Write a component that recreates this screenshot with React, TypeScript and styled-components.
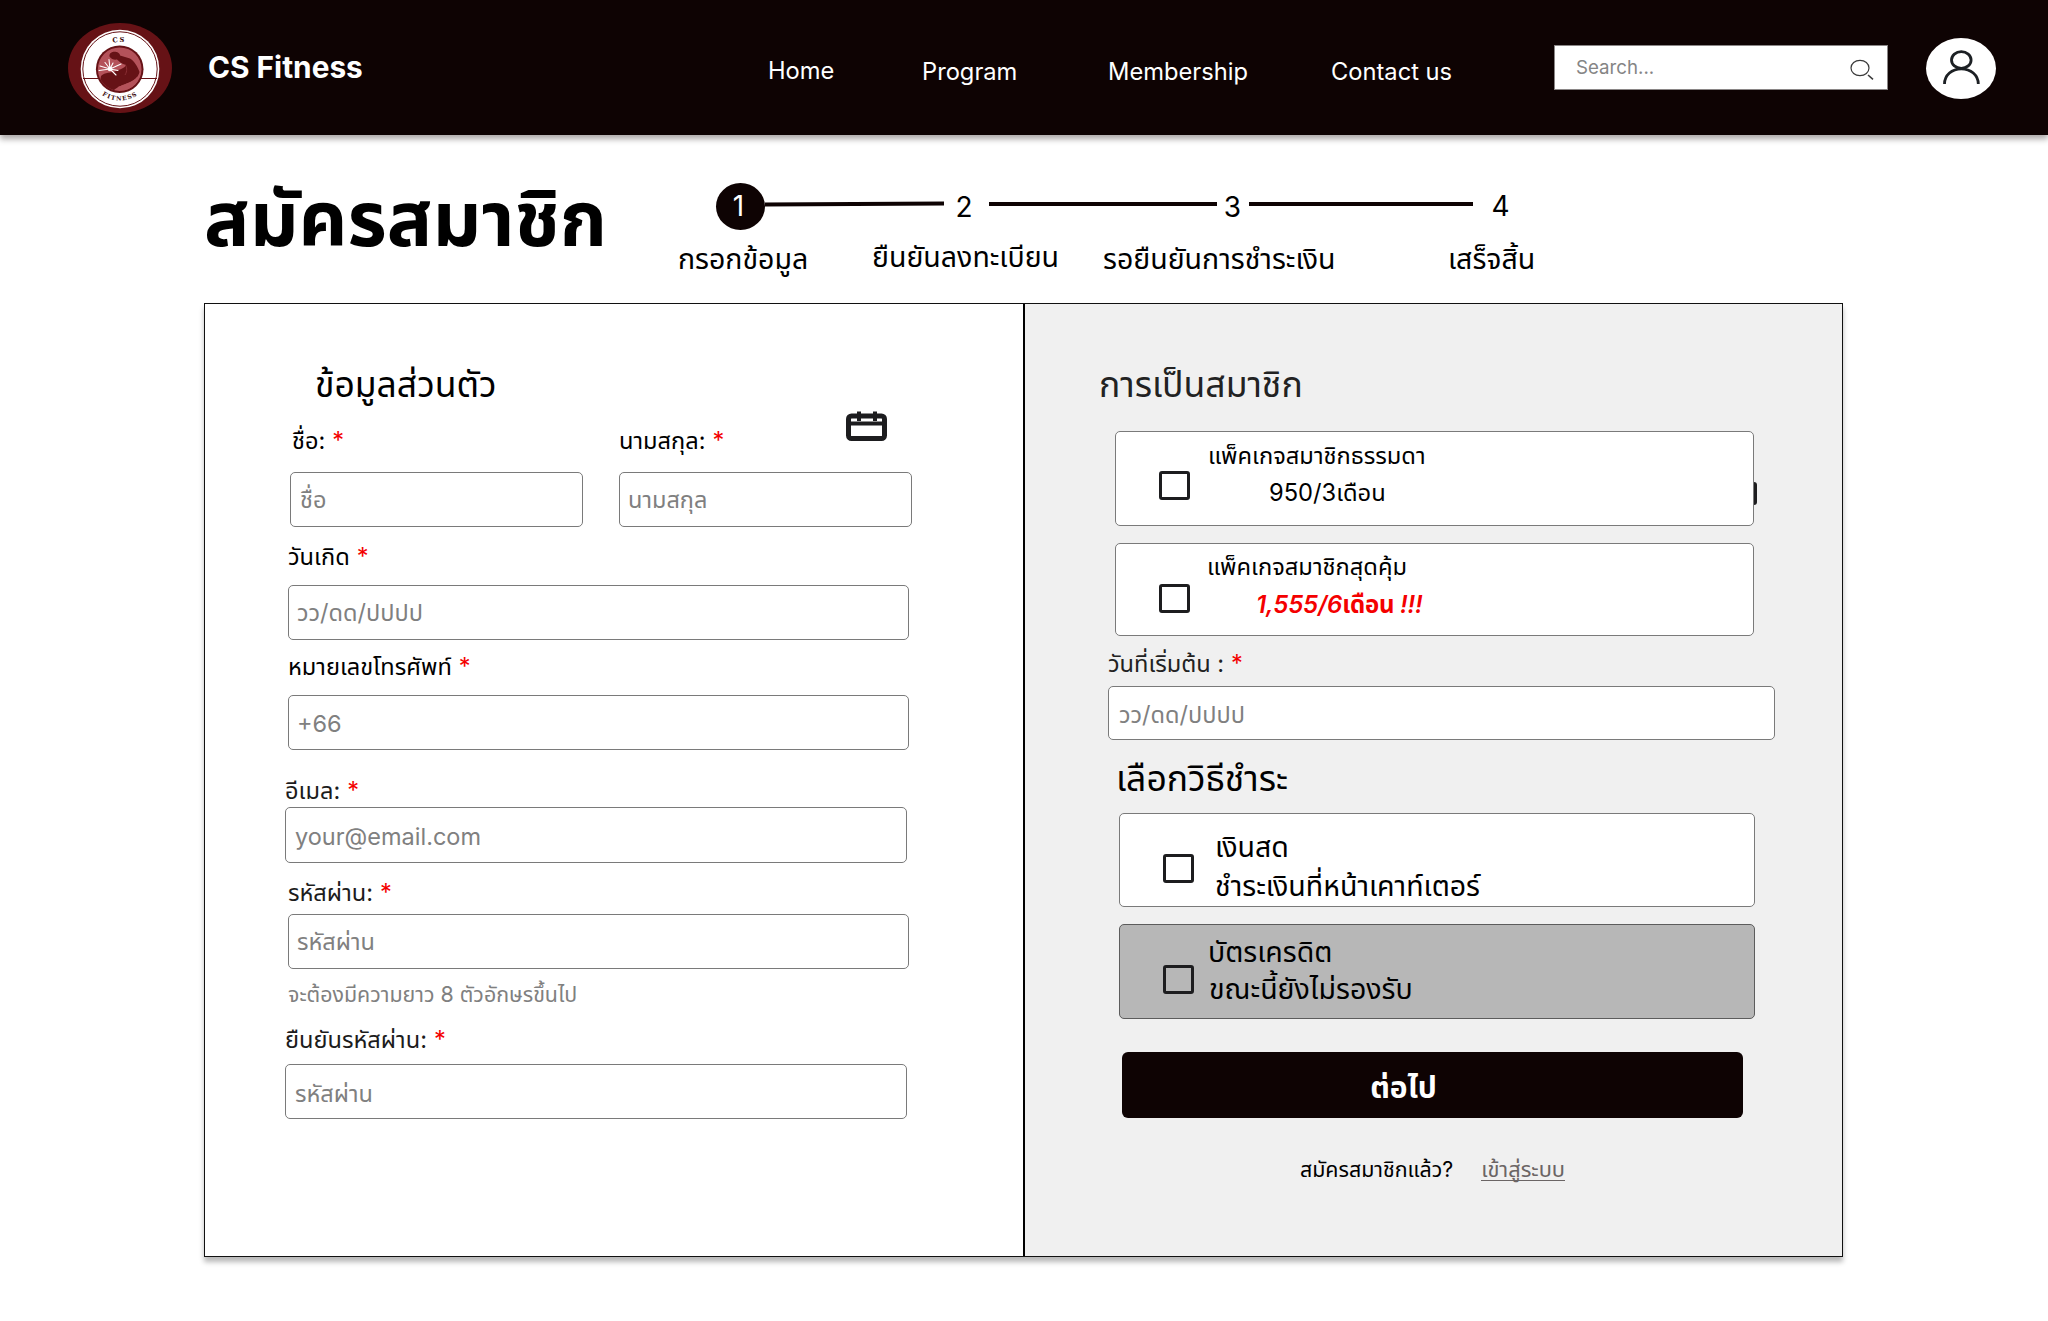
import React from "react";
import styled, { createGlobalStyle } from "styled-components";

const INK = "#0e0303";

const Global = createGlobalStyle`
  *, *::before, *::after { box-sizing: border-box; }
  body {
    margin: 0;
    background: #fff;
    color: #000;
    font-family: Inter, "Noto Sans Thai", "Noto Sans", sans-serif;
  }
`;

const Page = styled.div`
  min-height: 1321px;
  background: #fff;
  overflow: hidden;
`;

/* ---------- header ---------- */

const Header = styled.header`
  height: 135px;
  padding-left: 68px;
  display: grid;
  grid-template-columns: 140px 560px 154px 186px 223px 223px 372px 70px;
  align-items: center;
  background: ${INK};
  color: #fff;
  box-shadow: 0 4px 6px rgba(14, 3, 3, 0.35);
`;

const Logo = styled.svg`
  display: block;
  width: 104px;
  height: 90px;
  margin-top: 1px;
`;

const Brand = styled.div`
  padding-bottom: 2px;
  font-size: 29.8px;
  line-height: 36px;
  font-weight: 700;
  white-space: nowrap;
`;

const NavLink = styled.a<{ $drop: number }>`
  font-size: 23.7px;
  line-height: 30px;
  padding-top: ${(p) => p.$drop}px;
  color: #fff;
  text-decoration: none;
  white-space: nowrap;
`;

const Search = styled.div`
  width: 334px;
  height: 45px;
  padding: 0 12px 0 21px;
  display: flex;
  align-items: center;
  justify-content: space-between;
  background: #fff;
  border: 1px solid #8a8686;
  color: #858585;
  font-size: 18.7px;
  line-height: 24px;
`;

const SearchIcon = styled.svg`
  width: 25px;
  height: 22px;
  margin-top: 4px;
`;

const Avatar = styled.svg`
  display: block;
  width: 70px;
  height: 61px;
  margin-top: 2px;
`;

/* ---------- title and steps ---------- */

const Intro = styled.section`
  height: 168px;
  padding-left: 204px;
  display: flex;
  align-items: flex-start;
`;

const Title = styled.h1`
  width: 474px;
  margin: 39px 0 0;
  font-size: 75.8px;
  line-height: 90px;
  font-weight: 700;
  white-space: nowrap;
`;

const Steps = styled.div`
  padding-top: 47px;
`;

const Track = styled.div`
  height: 47px;
  padding-left: 38px;
  display: flex;
  align-items: center;
`;

const Dot = styled.div`
  width: 49px;
  height: 47px;
  margin-top: 1px;
  border-radius: 50%;
  display: flex;
  align-items: center;
  justify-content: center;
  padding-right: 4px;
  background: ${INK};
  color: #fff;
  font-size: 28px;
`;

const StepNumber = styled.div<{ $w: number; $drop?: number; $pull?: number }>`
  width: ${(p) => p.$w}px;
  padding: ${(p) => p.$drop ?? 0}px ${(p) => p.$pull ?? 0}px 0 0;
  text-align: center;
  font-size: 28px;
  line-height: 34px;
`;

const Rail = styled.div<{ $w: number; $tilt?: number }>`
  width: ${(p) => p.$w}px;
  height: 4px;
  margin-top: -3px;
  background: ${INK};
  transform: rotate(${(p) => p.$tilt ?? 0}deg);
`;

const StepLabels = styled.div`
  margin-top: 10px;
  display: grid;
  grid-template-columns: 194px 231px 345px auto;
`;

const StepLabel = styled.div<{ $lift?: number }>`
  margin-top: ${(p) => -(p.$lift ?? 0)}px;
  font-size: 28.5px;
  line-height: 40px;
  white-space: nowrap;
`;

/* ---------- panels ---------- */

const Panels = styled.main`
  width: 1639px;
  height: 954px;
  margin-left: 204px;
  display: grid;
  grid-template-columns: 818px 1fr;
  border: 1px solid #111;
  box-shadow: 0 5px 5px rgba(0, 0, 0, 0.28);
`;

const Personal = styled.section`
  padding-left: 79px;
  background: #fff;
`;

const Membership = styled.section`
  padding-left: 83px;
  background: #f0f0f0;
  border-left: 2px solid #000;
`;

const Heading = styled.h2<{ $top: number; $left: number; $color?: string }>`
  margin: ${(p) => p.$top}px 0 0 ${(p) => p.$left}px;
  font-size: 35.5px;
  line-height: 44px;
  font-weight: 400;
  color: ${(p) => p.$color ?? "#000"};
  white-space: nowrap;
`;

const Row = styled.div`
  display: flex;
  align-items: flex-start;
`;

const Field = styled.div<{ $top?: number; $left?: number }>`
  margin: ${(p) => p.$top ?? 0}px 0 0 ${(p) => p.$left ?? 0}px;
`;

const LabelRow = styled.div<{ $indent?: number; $color?: string }>`
  height: 30px;
  padding-left: ${(p) => p.$indent ?? 1}px;
  display: flex;
  gap: 7px;
  font-size: 23.6px;
  line-height: 30px;
  color: ${(p) => p.$color ?? "#000"};
  white-space: nowrap;
`;

const Star = styled.span`
  color: #f40000;
`;

const Box = styled.div<{ $w: number; $h?: number; $gap: number; $nudge?: number; $pad?: number }>`
  width: ${(p) => p.$w}px;
  height: ${(p) => p.$h ?? 55}px;
  margin-top: ${(p) => p.$gap}px;
  padding: ${(p) => p.$nudge ?? 0}px 8px 0 ${(p) => p.$pad ?? 8}px;
  display: flex;
  align-items: center;
  background: #fff;
  border: 1px solid #7a7a7a;
  border-radius: 5px;
  color: #808080;
  font-size: 23.5px;
  line-height: 30px;
  white-space: nowrap;
`;

const CalendarIcon = styled.svg`
  width: 41px;
  height: 30px;
  margin: -15px 25px 0 auto;
`;

const Hint = styled.p`
  margin: 10px 0 0 4px;
  font-size: 21.4px;
  line-height: 30px;
  color: #808080;
  white-space: nowrap;
`;

/* ---------- option cards ---------- */

const Card = styled.div<{ $top: number; $left: number; $w: number; $h: number; $muted?: boolean }>`
  position: relative;
  width: ${(p) => p.$w}px;
  height: ${(p) => p.$h}px;
  margin: ${(p) => p.$top}px 0 0 ${(p) => p.$left}px;
  display: flex;
  align-items: flex-start;
  background: ${(p) => (p.$muted ? "#b7b7b7" : "#fff")};
  border: 1px solid ${(p) => (p.$muted ? "#5c5c5c" : "#7a7a7a")};
  border-radius: 5px;
`;

const Check = styled.span<{ $top: number }>`
  flex: none;
  width: 31px;
  height: 29px;
  margin: ${(p) => p.$top}px 0 0 43px;
  border: 3px solid #1d1d1f;
  border-radius: 3px;
`;

const CardText = styled.div<{ $left: number }>`
  margin-left: ${(p) => p.$left}px;
`;

const Line = styled.div<{ $top: number; $size: number; $indent?: number }>`
  margin-top: ${(p) => p.$top}px;
  padding-left: ${(p) => p.$indent ?? 0}px;
  font-size: ${(p) => p.$size}px;
  line-height: 36px;
  white-space: nowrap;
`;

const Deal = styled(Line)`
  color: #f40000;
  font-weight: 700;
  letter-spacing: -0.15px;
`;

const Slanted = styled.span`
  font-style: italic;
  font-weight: 600;
`;

const Tab = styled.span`
  position: absolute;
  top: 50px;
  right: -4px;
  width: 3px;
  height: 23px;
  background: #1d1d1f;
  border-radius: 0 3px 3px 0;
`;

const Submit = styled.button`
  display: block;
  width: 621px;
  height: 66px;
  margin: 33px 0 0 14px;
  padding: 3px 58px 0 0;
  border: 0;
  border-radius: 6px;
  background: ${INK};
  color: #fff;
  font: 700 30px/36px Inter, "Noto Sans Thai", "Noto Sans", sans-serif;
`;

const SignIn = styled.div`
  margin: 36px 0 0 192px;
  display: flex;
  gap: 28px;
  font-size: 21.4px;
  line-height: 30px;
  white-space: nowrap;
`;

const SignInLink = styled.a`
  height: 27px;
  color: #6b6565;
  border-bottom: 1px solid #6b6565;
  font-size: 21.8px;
`;

function ClubLogo() {
  return (
    <Logo viewBox="0 0 104 90">
      <defs>
        <path id="arcTop" d="M25 46 A27 27 0 0 1 79 46" />
        <path id="arcBottom" d="M20.500 46 A31.500 31.500 0 0 0 83.500 46" />
        <clipPath id="disc">
          <circle cx="51.700" cy="46.200" r="21.800" />
        </clipPath>
      </defs>
      <ellipse cx="52" cy="45" rx="52" ry="45" fill="#661216" />
      <circle cx="52" cy="46" r="39.300" fill="#fff" />
      <circle cx="52" cy="46" r="37.200" fill="none" stroke="#661216" strokeWidth="1" />
      <path d="M15 55.500H89" stroke="#661216" strokeWidth="1.200" />
      <circle cx="51.700" cy="46.200" r="23.800" fill="#661216" />
      <circle cx="51.700" cy="46.200" r="21.800" fill="#b4525a" />
      <g clipPath="url(#disc)">
        <path
          d="M41.500 33.500 C41 30 44 28.500 47.500 28.800 C50.500 29.200 52 31 52 32.500 L62 35.500 C66 38 69.500 43 71.500 49 C70.500 54 66 58 60 60 C55 62 50 63 45 68 L30 68 L33 53 C37 49 43 50 48 48 C52 46.500 57 45 58 42 C54 41 51 38.500 49 36.500 C46.500 37 43.500 36.500 41.500 33.500Z"
          fill="#661216"
        />
        <path d="M57 41.500 C59 44 59.500 48 57 52" fill="none" stroke="#8d3238" strokeWidth="0.900" />
        <path d="M50 64 C57 61 65 59 69 54 L70 60 L60 68 L51 67Z" fill="#b4525a" />
      </g>
      <g stroke="#fff" strokeWidth="1.100" strokeLinecap="round">
        <path d="M42 46L32 43M42 46L37 39.500M42 46L41 36.500M42 46L45 40M42 46L53 41M42 46L50 47.500M42 46L31 47.500M42 46L48 52" />
        <circle cx="42" cy="46" r="1.700" fill="#fff" />
      </g>
      <g fill="#3a0b0d" fontFamily="'DejaVu Serif', serif" fontWeight="700" textAnchor="middle">
        <text fontSize="6.800" letterSpacing="1.500">
          <textPath href="#arcTop" startOffset="49%">CS</textPath>
        </text>
        <text fontSize="6" letterSpacing="1.100">
          <textPath href="#arcBottom" startOffset="50%">FITNESS</textPath>
        </text>
      </g>
    </Logo>
  );
}

function Label({ text, indent, color }: { text: string; indent?: number; color?: string }) {
  return (
    <LabelRow $indent={indent} $color={color}>
      <span>{text}</span>
      <Star>*</Star>
    </LabelRow>
  );
}

export default function App() {
  return (
    <Page>
      <Global />
      <Header>
        <ClubLogo />
        <Brand>CS Fitness</Brand>
        <NavLink $drop={6}>Home</NavLink>
        <NavLink $drop={9}>Program</NavLink>
        <NavLink $drop={9}>Membership</NavLink>
        <NavLink $drop={9}>Contact us</NavLink>
        <Search>
          <span>Search...</span>
          <SearchIcon viewBox="0 0 25 22" fill="none" stroke="#3a3a3a">
            <ellipse cx="10" cy="9" rx="9" ry="7.700" strokeWidth="1.200" />
            <path d="M18 16L23 20.300" strokeWidth="1.600" />
          </SearchIcon>
        </Search>
        <Avatar viewBox="0 0 70 61">
          <ellipse cx="35" cy="30.500" rx="35" ry="30.500" fill="#fff" />
          <g fill="none" stroke="#1c2024" strokeWidth="2.800">
            <ellipse cx="35.300" cy="22" rx="9.800" ry="8.300" />
            <path d="M18.500 46C18.500 37 26 30.800 35.300 30.800S52.300 37 52.300 46" />
          </g>
        </Avatar>
      </Header>

      <Intro>
        <Title>สมัครสมาชิก</Title>
        <Steps>
          <Track>
            <Dot>1</Dot>
            <Rail $w={179} $tilt={-0.35} />
            <StepNumber $w={45} $drop={2} $pull={5}>2</StepNumber>
            <Rail $w={228} />
            <StepNumber $w={32} $drop={2} $pull={1}>3</StepNumber>
            <Rail $w={224} />
            <StepNumber $w={55} $drop={1}>4</StepNumber>
          </Track>
          <StepLabels>
            <StepLabel>กรอกข้อมูล</StepLabel>
            <StepLabel $lift={2}>ยืนยันลงทะเบียน</StepLabel>
            <StepLabel>รอยืนยันการชำระเงิน</StepLabel>
            <StepLabel>เสร็จสิ้น</StepLabel>
          </StepLabels>
        </Steps>
      </Intro>

      <Panels>
        <Personal>
          <Heading $top={59} $left={31}>ข้อมูลส่วนตัว</Heading>
          <Row>
            <Field $top={19} $left={6}>
              <Label text="ชื่อ:" indent={2} />
              <Box $w={293} $gap={16} $pad={9}>ชื่อ</Box>
            </Field>
            <Field $top={19} $left={36}>
              <LabelRow $indent={0}>
                <span>นามสกุล:</span>
                <Star>*</Star>
                <CalendarIcon viewBox="0 0 41 30">
                  <rect x="2.500" y="5" width="36" height="22.500" rx="3" fill="none" stroke="#1d1d1f" strokeWidth="5" />
                  <path d="M3 12.500H38M13 0.500V10M29 0.500V10" stroke="#1d1d1f" strokeWidth="4" />
                </CalendarIcon>
              </LabelRow>
              <Box $w={293} $gap={16}>นามสกุล</Box>
            </Field>
          </Row>
          <Field $top={15} $left={4}>
            <Label text="วันเกิด" indent={0} />
            <Box $w={621} $gap={13}>วว/ดด/ปปปป</Box>
          </Field>
          <Field $top={12} $left={4}>
            <Label text="หมายเลขโทรศัพท์" indent={0} />
            <Box $w={621} $gap={13} $nudge={3}>+66</Box>
          </Field>
          <Field $top={26} $left={1}>
            <Label text="อีเมล:" indent={0} color="#1c1c1c" />
            <Box $w={622} $h={56} $gap={1} $nudge={3} $pad={9}>your@email.com</Box>
          </Field>
          <Field $top={15} $left={4}>
            <Label text="รหัสผ่าน:" indent={0} color="#1c1c1c" />
            <Box $w={621} $gap={6}>รหัสผ่าน</Box>
          </Field>
          <Hint>จะต้องมีความยาว 8 ตัวอักษรขึ้นไป</Hint>
          <Field $top={16} $left={1}>
            <Label text="ยืนยันรหัสผ่าน:" indent={0} color="#1c1c1c" />
            <Box $w={622} $gap={9} $nudge={4} $pad={9}>รหัสผ่าน</Box>
          </Field>
        </Personal>

        <Membership>
          <Heading $top={59} $left={-9} $color="#222">การเป็นสมาชิก</Heading>
          <Card $top={24} $left={7} $w={639} $h={95}>
            <Check $top={39} />
            <CardText $left={18}>
              <Line $top={6} $size={23.7}>แพ็คเกจสมาชิกธรรมดา</Line>
              <Line $top={1} $size={23.7} $indent={61}>950/3เดือน</Line>
            </CardText>
            <Tab />
          </Card>
          <Card $top={17} $left={7} $w={639} $h={93}>
            <Check $top={40} />
            <CardText $left={17}>
              <Line $top={5} $size={23.7}>แพ็คเกจสมาชิกสุดคุ้ม</Line>
              <Deal $top={2} $size={24} $indent={49}>
                <Slanted>1,555/6</Slanted>เดือน <Slanted>!!!</Slanted>
              </Deal>
            </CardText>
          </Card>
          <Field $top={13} $left={0}>
            <Label text="วันที่เริ่มต้น :" indent={0} color="#222" />
            <Box $w={667} $h={54} $gap={7} $nudge={4} $pad={10}>วว/ดด/ปปปป</Box>
          </Field>
          <Heading $top={17} $left={8}>เลือกวิธีชำระ</Heading>
          <Card $top={12} $left={11} $w={636} $h={94}>
            <Check $top={40} />
            <CardText $left={21}>
              <Line $top={15} $size={28.5}>เงินสด</Line>
              <Line $top={3} $size={28.5}>ชำระเงินที่หน้าเคาท์เตอร์</Line>
            </CardText>
          </Card>
          <Card $top={17} $left={11} $w={636} $h={95} $muted>
            <Check $top={40} />
            <CardText $left={14}>
              <Line $top={9} $size={28.5}>บัตรเครดิต</Line>
              <Line $top={1} $size={28.5} $indent={1}>ขณะนี้ยังไม่รองรับ</Line>
            </CardText>
          </Card>
          <Submit>ต่อไป</Submit>
          <SignIn>
            <span>สมัครสมาชิกแล้ว?</span>
            <SignInLink>เข้าสู่ระบบ</SignInLink>
          </SignIn>
        </Membership>
      </Panels>
    </Page>
  );
}
